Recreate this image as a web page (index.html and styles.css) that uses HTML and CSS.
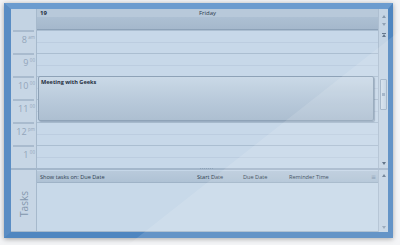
FILE: index.html
```html
<!DOCTYPE html>
<html>
<head>
<meta charset="utf-8">
<link rel="stylesheet" href="styles.css">
</head>
<body>
<div class="window">
  <div class="inner">
    <div class="cal">
      <div class="timecol">
        <div class="corner"></div>
        <div class="slot"><span class="h">8</span><span class="m">am</span></div>
        <div class="slot"><span class="h">9</span><span class="m">00</span></div>
        <div class="slot"><span class="h">10</span><span class="m">00</span></div>
        <div class="slot"><span class="h">11</span><span class="m">00</span></div>
        <div class="slot"><span class="h">12</span><span class="m">pm</span></div>
        <div class="slot"><span class="h">1</span><span class="m">00</span></div>
      </div>
      <div class="daycol">
        <div class="dayhead">
          <div class="dh-top"><span class="dnum">19</span><span class="dname">Friday</span></div>
          <div class="dh-bar"></div>
        </div>
        <div class="grid">
          <div class="row"></div>
          <div class="row"></div>
          <div class="row"></div>
          <div class="row"></div>
          <div class="row"></div>
          <div class="row"></div>
          <div class="event">Meeting with Geeks</div>
        </div>
      </div>
      <div class="vscroll">
        <div class="navs">
          <span class="arr up small"></span>
          <span class="arr down small light"></span>
        </div>
        <div class="track">
          <span class="arr up top"></span>
          <div class="thumb"><span class="grip"></span></div>
          <span class="arr down"></span>
        </div>
      </div>
    </div>
    <div class="tasks">
      <div class="tlabel"><span class="ttext">Tasks</span></div>
      <div class="tbody">
        <div class="thead">
          <span class="tc c1">Show tasks on: Due Date</span>
          <span class="tc c2">Start Date</span>
          <span class="tc c3">Due Date</span>
          <span class="tc c4">Reminder Time</span>
          <span class="ticon">&#8801;</span>
          <span class="splitgrip"></span>
        </div>
        <div class="tcontent"></div>
      </div>
      <div class="tscroll">
        <span class="arr up"></span>
        <span class="arr down light"></span>
      </div>
    </div>
  </div>
</div>
<svg class="sheen" width="400" height="245" viewBox="0 0 400 245">
  <polygon points="439,0 400,0 400,245 128,245" fill="#ffffff" fill-opacity="0.12"/>
</svg>
</body>
</html>
```

FILE: styles.css
```css
* { box-sizing: border-box; }
html, body { margin: 0; padding: 0; }
body {
  width: 400px;
  height: 245px;
  background: #f3f4f6;
  font-family: "Open Sans", "DejaVu Sans", sans-serif;
  overflow: hidden;
  position: relative;
}
.window {
  margin: 3px 0 0 4px;
  width: 389px;
  height: 235px;
  background: #5a8fc7;
  border-top: 6px solid #6c9ccf;
  border-left: 7px solid #5a8dc4;
  border-right: 5px solid #4f86c0;
  border-bottom: 6px solid #4f86c0;
  box-shadow: 0 1px 5px rgba(0,0,0,0.35);
}
.inner {
  width: 377px;
  height: 223px;
  display: flex;
  flex-direction: column;
  background: #c6d7e8;
}
.cal {
  height: 159px;
  display: flex;
}
.timecol {
  width: 26px;
  display: flex;
  flex-direction: column;
  background: #c7d6e5;
  border-right: 1px solid #a6b9cc;
}
.corner {
  height: 21px;
  background: #c3d3e3;
}
.slot {
  height: 23px;
  position: relative;
  border-top: 2px solid #a9bbce;
  margin: 0 2px;
  display: flex;
  justify-content: flex-end;
  align-items: flex-start;
  padding-top: 2px;
  color: #93a5ba;
}
.h { font-size: 9px; line-height: 12px; }
.m { font-size: 4.5px; line-height: 7px; margin-left: 1.5px; margin-right: -1px; }
.daycol {
  width: 341px;
  display: flex;
  flex-direction: column;
}
.dayhead {
  height: 21px;
  display: flex;
  flex-direction: column;
  border-bottom: 1px solid #8da2b8;
}
.dh-top {
  height: 8px;
  background: #b8c9da;
  display: flex;
  font-size: 6px;
  line-height: 9px;
  color: #2b3a4c;
  position: relative;
}
.dnum { font-weight: bold; margin-left: 3px; color: #1f2d3d; }
.dname { position: absolute; left: 162px; top: 0; font-size: 6px; }
.dh-bar {
  flex: 1;
  background: linear-gradient(#adc0d3, #a5b8cc);
}
.grid {
  flex: 1;
  display: flex;
  flex-direction: column;
  position: relative;
}
.row {
  height: 23px;
  border-top: 1px solid #abbed1;
  background: linear-gradient(transparent 11px, #bccde0 11px, #bccde0 12px, transparent 12px), #c7d8e9;
}
.event {
  position: absolute;
  left: 1px;
  right: 4px;
  top: 46px;
  height: 45px;
  border: 1px solid #8ea2b7;
  border-radius: 2px;
  background: linear-gradient(#cad9e7, #b7c8d9 60%, #adbfd1);
  box-shadow: 1px 1px 1px rgba(60,80,110,0.35);
  font-size: 5.6px;
  font-weight: bold;
  color: #1f2d3d;
  padding: 1px 2px;
  line-height: 8px;
}
.vscroll {
  width: 10px;
  display: flex;
  flex-direction: column;
  background: #c4d4e4;
  border-left: 1px solid #aebfd1;
}
.navs {
  height: 21px;
  display: flex;
  flex-direction: column;
  align-items: center;
  justify-content: space-around;
  padding: 3px 0 2px;
}
.track {
  flex: 1;
  display: flex;
  flex-direction: column;
  align-items: center;
  padding: 3px 0 3px;
}
.arr {
  width: 0;
  height: 0;
  border-left: 2.5px solid transparent;
  border-right: 2.5px solid transparent;
  display: block;
}
.arr.up { border-bottom: 3px solid #66798f; }
.arr.down { border-top: 3px solid #4e627a; }
.arr.small.up { border-bottom-color: #8598ad; }
.arr.light { border-top-color: #8fa1b5; }
.arr.top { box-shadow: 0 -1px 0 0 #66798f; margin-top: 1px; }
.thumb {
  margin-top: 42px;
  width: 7px;
  height: 31px;
  border: 1px solid #9db0c4;
  border-radius: 1px;
  background: linear-gradient(90deg, #d3e0ec, #c2d2e2);
  display: flex;
  align-items: center;
  justify-content: center;
}
.grip {
  width: 3px;
  height: 3px;
  background: #9aaec3;
}
.track .arr.down { margin-top: auto; }
.tasks {
  height: 64px;
  display: flex;
  border-top: 2px solid #a4b7cb;
}
.tlabel {
  width: 26px;
  background: #c7d6e5;
  border-right: 1px solid #a6b9cc;
  border-bottom: 1px solid #a6b9cc;
  display: flex;
  align-items: center;
  justify-content: center;
}
.ttext {
  display: block;
  transform: rotate(-90deg);
  font-size: 10px;
  color: #8397ad;
  margin-top: 6px;
}
.tbody {
  width: 341px;
  display: flex;
  flex-direction: column;
  border-bottom: 1px solid #a6b9cc;
}
.thead {
  height: 12px;
  margin-top: 1px;
  background: linear-gradient(#b9cadb, #afc2d5);
  border-bottom: 1px solid #9fb3c7;
  display: flex;
  align-items: center;
  font-size: 5.6px;
  color: #2f3e50;
  position: relative;
}
.tc { white-space: nowrap; }
.c1 { margin-left: 3px; width: 157px; }
.c2 { width: 46px; }
.c3 { width: 46px; }
.c4 { width: 82px; }
.ticon { font-size: 6px; color: #7890a8; }
.splitgrip {
  position: absolute;
  left: 163px;
  top: -3px;
  width: 13px;
  height: 1px;
  border-top: 1px dotted #8ea3b9;
}
.tcontent {
  flex: 1;
  background: #c8d9e9;
}
.tscroll {
  width: 10px;
  background: #c4d4e4;
  border-left: 1px solid #aebfd1;
  display: flex;
  flex-direction: column;
  align-items: center;
  justify-content: space-between;
  padding: 4px 0 3px;
}
.sheen {
  position: absolute;
  left: 0;
  top: 0;
  pointer-events: none;
}
```
